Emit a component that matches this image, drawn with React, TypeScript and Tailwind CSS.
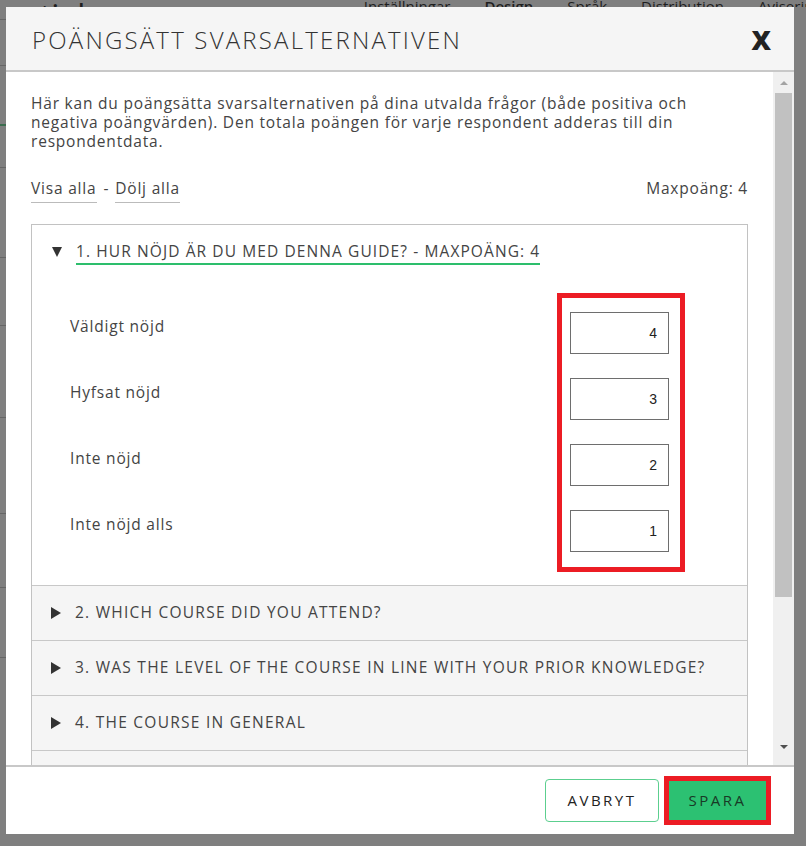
import React from "react";

const options = [
  { label: "Väldigt nöjd", value: "4" },
  { label: "Hyfsat nöjd", value: "3" },
  { label: "Inte nöjd", value: "2" },
  { label: "Inte nöjd alls", value: "1" },
];

const collapsed = [
  "2. WHICH COURSE DID YOU ATTEND?",
  "3. WAS THE LEVEL OF THE COURSE IN LINE WITH YOUR PRIOR KNOWLEDGE?",
  "4. THE COURSE IN GENERAL",
  "5. THE TEACHER",
];

export default function App() {
  return (
    <div
      className="relative w-[806px] h-[846px] overflow-hidden bg-[#7f7f7f]"
      style={{ fontFamily: '"Open Sans", "Liberation Sans", sans-serif' }}
    >
      {/* page behind the overlay */}
      <div className="flex items-start h-[7px] overflow-hidden text-[#1e1e1e]">
        <span className="ml-[-46px] mt-[-4px] text-[32px] leading-[40px]">Essentials</span>
        <div className="ml-auto mr-[-30px] flex gap-[34px] text-[15px] leading-[20px] mt-[-4px]">
          <span>Inställningar</span>
          <span className="font-semibold">Design</span>
          <span>Språk</span>
          <span>Distribution</span>
          <span>Aviseringar</span>
        </div>
      </div>
      <div className="flex flex-col w-[6px]">
        <div className="h-[13px] border-b border-[#666]" />
        <div className="h-[46px] border-b border-[#666]" />
        <div className="h-[60px] border-b-2 border-[#3b6d4e]" />
        <div className="h-[42px] border-b border-[#666]" />
        <div className="h-[90px] border-b border-[#666]" />
        <div className="h-[68px] border-b border-[#666]" />
        <div className="h-[92px] border-b border-[#666]" />
        <div className="h-[96px] border-b border-[#666]" />
        <div className="h-[74px] border-b border-[#666]" />
        <div className="h-[70px] border-b border-[#666]" />
      </div>

      {/* modal */}
      <div className="absolute left-[6px] top-[7px] w-[788px] h-[827px] bg-white flex flex-col">
        <div className="h-[65px] shrink-0 bg-[#f5f5f5] border-b-2 border-[#c8c8c8] flex items-center justify-between pl-[26px] pr-[23px]">
          <h2 className="text-[24px] font-light tracking-[2.2px] text-[#333] leading-none pt-[2px]">
            POÄNGSÄTT SVARSALTERNATIVEN
          </h2>
          <span className="text-[27px] font-extrabold text-[#222] leading-none pt-[2px]">X</span>
        </div>

        <div className="flex flex-1 min-h-0">
          <div className="flex-1 min-w-0 overflow-hidden px-[25px] pt-[22px] text-[#444]">
            <p className="max-w-[690px] text-[15.5px] leading-[19px] tracking-[0.8px]">
              Här kan du poängsätta svarsalternativen på dina utvalda frågor (både positiva och negativa
              poängvärden). Den totala poängen för varje respondent adderas till din respondentdata.
            </p>

            <div className="flex items-start justify-between mt-[28px] text-[15.5px] leading-[19px] tracking-[0.8px]">
              <div className="flex items-start">
                <span className="border-b border-[#bbb] pb-[4px] pr-[1px]">Visa alla</span>
                <span className="px-[6px]">-</span>
                <span className="border-b border-[#bbb] pb-[4px]">Dölj alla</span>
              </div>
              <span>Maxpoäng: 4</span>
            </div>

            <div className="mt-[21px] border border-[#c2c2c2] border-b-0">
              <div className="bg-white">
                <div className="flex items-start pl-[20px] pt-[17px]">
                  <div className="w-[24px] h-[19px] flex items-center">
                    <div className="w-0 h-0 border-l-[5.5px] border-r-[5.5px] border-t-[10px] border-l-transparent border-r-transparent border-t-[#333]" />
                  </div>
                  <span className="text-[15.5px] leading-[19px] tracking-[1.1px] pb-[2px] border-b-2 border-[#2dbe6c]">
                    1. HUR NÖJD ÄR DU MED DENNA GUIDE? - MAXPOÄNG: 4
                  </span>
                </div>
                <div className="relative flex flex-col gap-[24px] pt-[47px] pb-[33px] pl-[38px] pr-[78px]">
                  {options.map((o) => (
                    <div key={o.value} className="flex items-start justify-between">
                      <span className="pt-[5px] text-[15.5px] leading-[19px] tracking-[0.8px]">{o.label}</span>
                      <div
                        className="w-[99px] h-[42px] border border-[#6e6e6e] flex items-center justify-end pr-[11px] text-[14px] text-[#222]"
                        style={{ fontFamily: '"Liberation Sans", Arial, sans-serif' }}
                      >
                        {o.value}
                      </div>
                    </div>
                  ))}
                  <div className="absolute left-[525px] top-[28px] w-[128px] h-[279px] border-[5px] border-[#ec1c24]" />
                </div>
              </div>
              {collapsed.map((q) => (
                <div
                  key={q}
                  className="h-[55px] border-t border-[#c8c8c8] bg-[#f5f5f5] flex items-center pl-[19px]"
                >
                  <div className="w-[24px] flex items-center">
                    <div className="w-0 h-0 border-t-[6px] border-b-[6px] border-l-[10px] border-t-transparent border-b-transparent border-l-[#333]" />
                  </div>
                  <span className="text-[15.5px] tracking-[1.25px]">{q}</span>
                </div>
              ))}
            </div>
          </div>

          {/* scrollbar */}
          <div className="w-[21px] shrink-0 bg-[#f0f0f0] flex flex-col items-center">
            <div className="h-[21px] flex items-center justify-center">
              <div className="w-0 h-0 border-l-[4px] border-r-[4px] border-b-[4px] border-l-transparent border-r-transparent border-b-[#a3a3a3]" />
            </div>
            <div className="w-[17px] h-[504px] bg-[#c1c1c1]" />
            <div className="flex-1" />
            <div className="h-[26px] flex items-start justify-center pt-[6px]">
              <div className="w-0 h-0 border-l-[4px] border-r-[4px] border-t-[4px] border-l-transparent border-r-transparent border-t-[#505050]" />
            </div>
          </div>
        </div>

        <div className="h-[69px] shrink-0 border-t-2 border-[#c8c8c8] flex items-center justify-end gap-[5px] pr-[23px]">
          <button className="w-[114px] h-[43px] rounded-[4px] border border-[#5ccf8f] text-[15px] tracking-[2.5px] text-[#222]">
            AVBRYT
          </button>
          <div className="border-[5px] border-[#ec1c24]">
            <button className="w-[97px] h-[39px] bg-[#2cc172] text-[15px] tracking-[2.5px] text-[#183a26] block">
              SPARA
            </button>
          </div>
        </div>
      </div>
    </div>
  );
}
